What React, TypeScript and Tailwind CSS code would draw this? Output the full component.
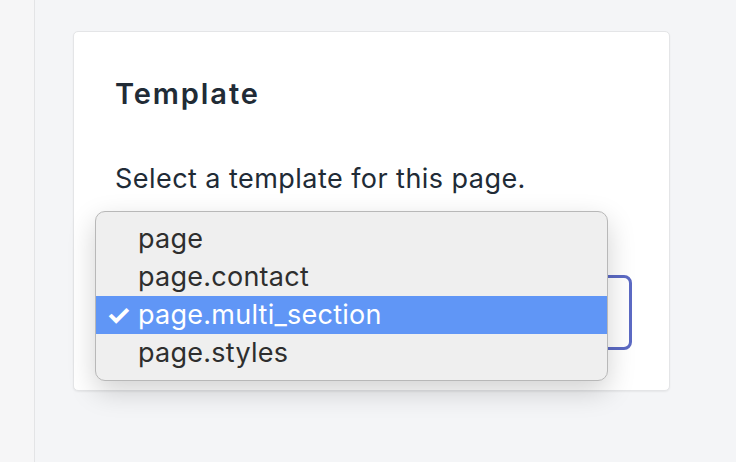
const OPTIONS = ["page", "page.contact", "page.multi_section", "page.styles"];
const SELECTED = "page.multi_section";

export default function App() {
  return (
    <div
      className="flex w-[736px] h-[462px] overflow-hidden bg-[#f4f5f7]"
      style={{ fontFamily: "Inter, 'Noto Sans', sans-serif" }}
    >
      {/* Sidebar edge */}
      <div className="w-[35px] shrink-0 bg-[#f6f6f7] border-r border-[#e3e4e6]" />

      {/* Main */}
      <div className="flex-1 pl-[38px] pt-[31px]">
        <div className="relative w-[597px] h-[360px] rounded-[5px] bg-white border border-[#e4e5e7] shadow-[0_1px_2px_rgba(0,0,0,0.06)] px-[41px] pt-[45px]">
          <h2 className="text-[29px] leading-[34px] font-semibold tracking-[1.9px] text-[#212b36]">Template</h2>
          <p className="mt-[51px] text-[27px] leading-[34px] tracking-[0.45px] text-[#212b36]">
            Select a template for this page.
          </p>

          {/* Select (behind the open menu) */}
          <div className="mt-[79px] w-[517px] h-[75px] rounded-[8px] border-[3px] border-[#5c6ac4] bg-white" />

          {/* Open menu */}
          <div className="absolute left-[21px] top-[179px] w-[513px] rounded-[10px] bg-[#efefef] border border-[#b8b8b8] shadow-[0_10px_28px_rgba(0,0,0,0.18)] py-[8px]">
            {OPTIONS.map((o) => {
              const active = o === SELECTED;
              return (
                <div
                  key={o}
                  className={
                    active
                      ? "flex items-center h-[38px] bg-[#6096f6] text-white"
                      : "flex items-center h-[38px] text-[#2e2e2e]"
                  }
                >
                  <span className="w-[42px] pl-[10px] text-[28px] leading-none font-bold">{active ? "✓" : ""}</span>
                  <span className="text-[27px] leading-none tracking-[0.25px] -mt-[2px]">{o}</span>
                </div>
              );
            })}
          </div>
        </div>
      </div>
    </div>
  );
}
